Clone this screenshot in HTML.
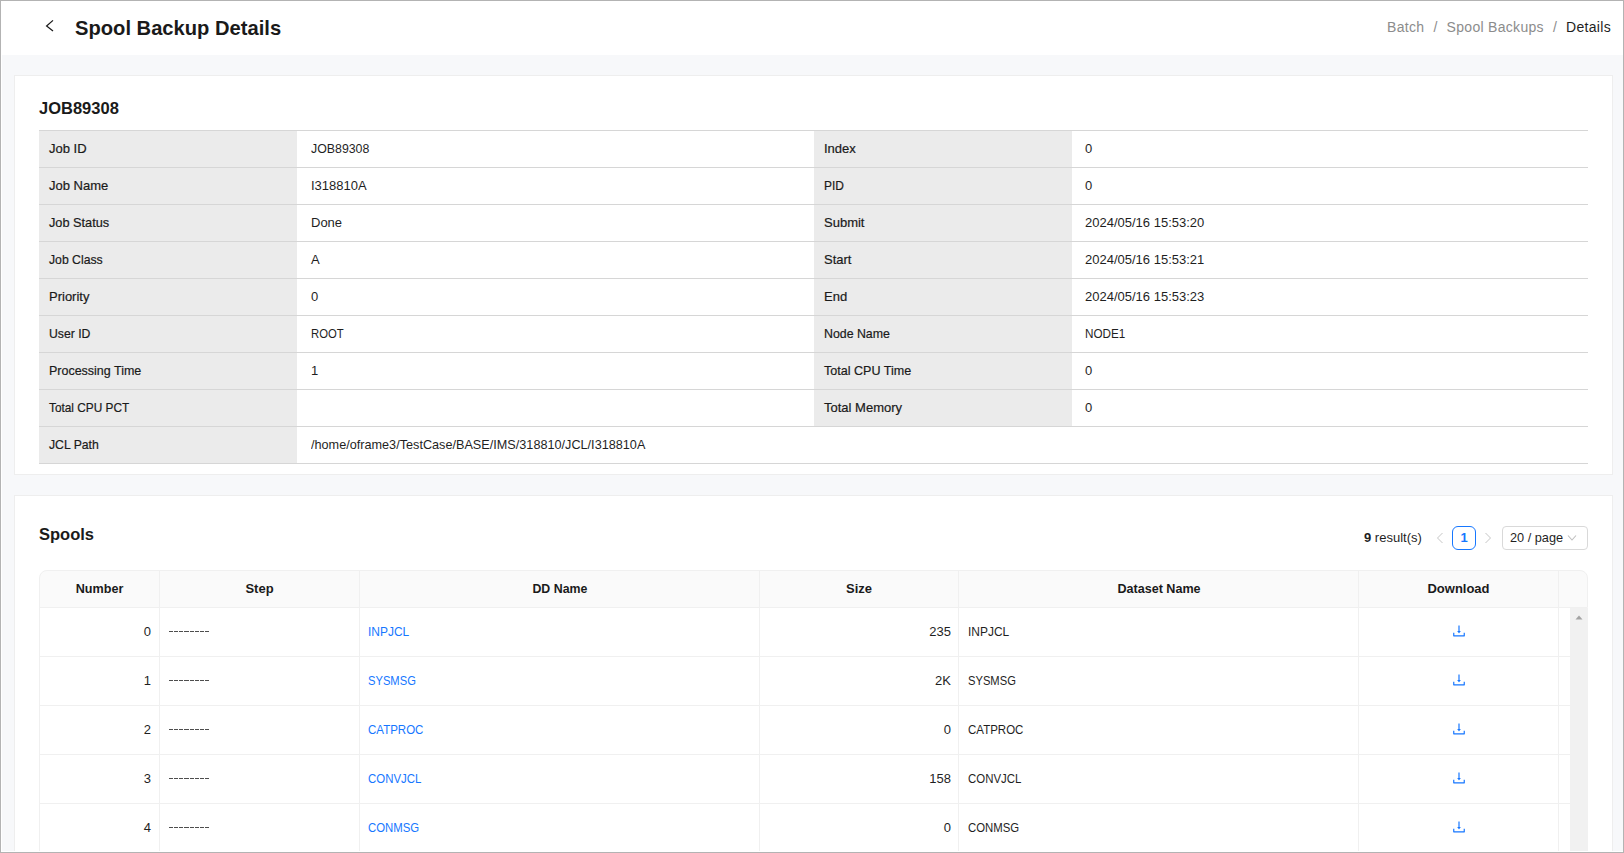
<!DOCTYPE html>
<html><head><meta charset="utf-8">
<style>
*{box-sizing:border-box;margin:0;padding:0}
html,body{width:1624px;height:853px;overflow:hidden;background:#f7f8fa;font-family:"Liberation Sans",sans-serif;color:#1f1f1f;position:relative}
.abs{position:absolute}
.sx{display:inline-block}
.frame{position:absolute;left:0;top:0;width:1624px;height:853px;border:1px solid #b3b3b3;box-shadow:inset 1px -1px 0 #fff;z-index:50;pointer-events:none}
.hdr{position:absolute;left:0;top:0;width:1624px;height:55px;background:#fff}
.back{position:absolute;left:40px;top:17px}
.title{position:absolute;left:75px;top:14.5px;font-size:21px;font-weight:bold;line-height:26px;transform:scaleX(0.96);transform-origin:0 50%;color:#1a1a1a;white-space:nowrap}
.bc{position:absolute;right:13px;top:17px;font-size:14px;letter-spacing:0.3px;line-height:20px;color:#8c8c8c;white-space:nowrap}
.bc .sep{margin:0 9px}
.bc .cur{color:#1f1f1f}
.card{position:absolute;left:14px;width:1599px;height:400px;background:#fff;border:1px solid #eeeeee}
.h{position:absolute;left:39px;font-size:16.5px;font-weight:bold;line-height:20px;color:#1a1a1a;white-space:nowrap}
table.dt{position:absolute;left:39px;top:130px;width:1549px;border-collapse:collapse;table-layout:fixed;font-size:13px}
table.dt td{height:37px;border-top:1px solid #d6d6d6;border-bottom:1px solid #d6d6d6;padding:0 0 0 11px;white-space:nowrap;color:#1f1f1f}
table.dt td.l{background:#ebebeb;color:#1a1a1a;padding-left:10px;-webkit-text-stroke:0.2px #1a1a1a}
table.dt td.v{padding-left:14px}
table.dt td.v2{padding-left:13px}
.tx{position:relative;top:-1px}
.th{position:absolute;left:39px;top:570px;width:1549px;height:38px;background:#fafafa;border:1px solid #f0f0f0;border-radius:8px 8px 0 0}
.hc{position:absolute;top:571px;height:36px;line-height:36px;font-size:13px;font-weight:bold;text-align:center;color:#1a1a1a;white-space:nowrap}
.vl{position:absolute;width:1px;background:#f0f0f0}
.r{position:absolute;left:40px;width:1530px;height:49px;border-bottom:1px solid #f0f0f0;font-size:13px}
.c{position:absolute;top:0;height:48px;line-height:48px;white-space:nowrap}
.n{left:0;width:111px;text-align:right}
.dash{position:absolute;left:128.5px;top:23px;width:41px;height:1px;background:repeating-linear-gradient(90deg,#4d4d4d 0,#4d4d4d 4.1px,transparent 4.1px,transparent 5.15px)}
.dd{left:328px;color:#1677ff}
.sz{left:720px;width:191px;text-align:right}
.ds{left:928px}
.dl{left:1411px;top:14.5px;height:16px;line-height:0}
.pg{position:absolute;top:526px;height:24px;font-size:13px;line-height:24px;white-space:nowrap}
</style></head><body>
<div class="hdr">
  <svg class="back" width="16" height="16" viewBox="0 0 16 16"><polyline points="13.0,3.4 6.6,9 13.0,14.1" fill="none" stroke="#1a1a1a" stroke-width="1.25"/></svg>
  <div class="title">Spool Backup Details</div>
  <div class="bc"><span>Batch</span><span class="sep">/</span><span>Spool Backups</span><span class="sep">/</span><span class="cur">Details</span></div>
</div>

<div class="card" style="top:75px"></div>
<div class="h" style="top:98px">JOB89308</div>
<table class="dt">
  <colgroup><col style="width:258px"><col style="width:517px"><col style="width:258px"><col style="width:516px"></colgroup>
  <tr><td class="l"><span class="tx">Job ID</span></td><td class="v"><span class="tx"><span class="sx" style="transform:scaleX(0.95);transform-origin:0 50%">JOB89308</span></span></td><td class="l"><span class="tx">Index</span></td><td class="v v2"><span class="tx">0</span></td></tr>
  <tr><td class="l"><span class="tx">Job Name</span></td><td class="v"><span class="tx">I318810A</span></td><td class="l"><span class="tx"><span class="sx" style="transform:scaleX(0.92);transform-origin:0 50%">PID</span></span></td><td class="v v2"><span class="tx">0</span></td></tr>
  <tr><td class="l"><span class="tx"><span class="sx" style="transform:scaleX(0.98);transform-origin:0 50%">Job Status</span></span></td><td class="v"><span class="tx">Done</span></td><td class="l"><span class="tx">Submit</span></td><td class="v v2"><span class="tx">2024/05/16 15:53:20</span></td></tr>
  <tr><td class="l"><span class="tx"><span class="sx" style="transform:scaleX(0.94);transform-origin:0 50%">Job Class</span></span></td><td class="v"><span class="tx">A</span></td><td class="l"><span class="tx">Start</span></td><td class="v v2"><span class="tx">2024/05/16 15:53:21</span></td></tr>
  <tr><td class="l"><span class="tx">Priority</span></td><td class="v"><span class="tx">0</span></td><td class="l"><span class="tx">End</span></td><td class="v v2"><span class="tx">2024/05/16 15:53:23</span></td></tr>
  <tr><td class="l"><span class="tx"><span class="sx" style="transform:scaleX(0.94);transform-origin:0 50%">User ID</span></span></td><td class="v"><span class="tx"><span class="sx" style="transform:scaleX(0.87);transform-origin:0 50%">ROOT</span></span></td><td class="l"><span class="tx"><span class="sx" style="transform:scaleX(0.95);transform-origin:0 50%">Node Name</span></span></td><td class="v v2"><span class="tx"><span class="sx" style="transform:scaleX(0.9);transform-origin:0 50%">NODE1</span></span></td></tr>
  <tr><td class="l"><span class="tx"><span class="sx" style="transform:scaleX(0.96);transform-origin:0 50%">Processing Time</span></span></td><td class="v"><span class="tx">1</span></td><td class="l"><span class="tx"><span class="sx" style="transform:scaleX(0.965);transform-origin:0 50%">Total CPU Time</span></span></td><td class="v v2"><span class="tx">0</span></td></tr>
  <tr><td class="l"><span class="tx"><span class="sx" style="transform:scaleX(0.91);transform-origin:0 50%">Total CPU PCT</span></span></td><td class="v"><span class="tx"></span></td><td class="l"><span class="tx">Total Memory</span></td><td class="v v2"><span class="tx">0</span></td></tr>
  <tr><td class="l"><span class="tx"><span class="sx" style="transform:scaleX(0.94);transform-origin:0 50%">JCL Path</span></span></td><td class="v" colspan="3"><span class="tx"><span class="sx" style="transform:scaleX(0.974);transform-origin:0 50%">/home/oframe3/TestCase/BASE/IMS/318810/JCL/I318810A</span></span></td></tr>
</table>

<div class="card" style="top:495px"></div>
<div class="h" style="top:524px">Spools</div>

<div class="pg" style="left:1364px"><b>9</b> result(s)</div>
<svg class="abs" style="left:1436px;top:532px" width="8" height="12" viewBox="0 0 8 12"><polyline points="6.5,1 1.5,6 6.5,11" fill="none" stroke="#c6c6c6" stroke-width="1.0"/></svg>
<div class="abs" style="left:1452px;top:526px;width:24px;height:24px;border:1px solid #1677ff;border-radius:6px;color:#1677ff;font-size:13px;font-weight:bold;line-height:22px;text-align:center">1</div>
<svg class="abs" style="left:1484px;top:532px" width="8" height="12" viewBox="0 0 8 12"><polyline points="1.5,1 6.5,6 1.5,11" fill="none" stroke="#c6c6c6" stroke-width="1.0"/></svg>
<div class="abs" style="left:1502px;top:526px;width:86px;height:24px;border:1px solid #d9d9d9;border-radius:4px"></div>
<div class="pg" style="left:1510px"><span class="sx" style="transform:scaleX(0.98);transform-origin:0 50%">20 / page</span></div>
<svg class="abs" style="left:1567px;top:534px" width="10" height="8" viewBox="0 0 10 8"><polyline points="1,1.5 5,6 9,1.5" fill="none" stroke="#bfbfbf" stroke-width="1.1"/></svg>

<div class="th"></div>
<div class="vl" style="left:39px;top:578px;height:280px"></div>
<div class="hc" style="left:40px;width:119px"><span class="sx" style="transform:scaleX(0.97);transform-origin:50% 50%">Number</span></div>
<div class="hc" style="left:160px;width:199px">Step</div>
<div class="hc" style="left:360px;width:399px"><span class="sx" style="transform:scaleX(0.95);transform-origin:50% 50%">DD Name</span></div>
<div class="hc" style="left:760px;width:198px">Size</div>
<div class="hc" style="left:959px;width:399px"><span class="sx" style="transform:scaleX(0.968);transform-origin:50% 50%">Dataset Name</span></div>
<div class="hc" style="left:1359px;width:199px">Download</div>
<div class="r" style="top:608px"><div class="c n">0</div><div class="dash"></div><div class="c dd"><span class="sx" style="transform:scaleX(0.92);transform-origin:0 50%">INPJCL</span></div><div class="c sz">235</div><div class="c ds"><span class="sx" style="transform:scaleX(0.92);transform-origin:0 50%">INPJCL</span></div><div class="c dl"><svg width="16" height="16" viewBox="0 0 1024 1024"><path fill="#1677ff" d="M505.7 661a8 8 0 0012.6 0l112-141.7c4.1-5.2.4-12.9-6.3-12.9h-74.1V168c0-4.4-3.6-8-8-8h-60c-4.4 0-8 3.6-8 8v338.3H400c-6.7 0-10.4 7.7-6.3 12.9l112 141.8zM878 626h-60c-4.4 0-8 3.6-8 8v154H214V634c0-4.4-3.6-8-8-8h-60c-4.4 0-8 3.6-8 8v198c0 17.7 14.3 32 32 32h684c17.7 0 32-14.3 32-32V634c0-4.4-3.6-8-8-8z"/></svg></div></div>
<div class="r" style="top:657px"><div class="c n">1</div><div class="dash"></div><div class="c dd"><span class="sx" style="transform:scaleX(0.86);transform-origin:0 50%">SYSMSG</span></div><div class="c sz">2K</div><div class="c ds"><span class="sx" style="transform:scaleX(0.86);transform-origin:0 50%">SYSMSG</span></div><div class="c dl"><svg width="16" height="16" viewBox="0 0 1024 1024"><path fill="#1677ff" d="M505.7 661a8 8 0 0012.6 0l112-141.7c4.1-5.2.4-12.9-6.3-12.9h-74.1V168c0-4.4-3.6-8-8-8h-60c-4.4 0-8 3.6-8 8v338.3H400c-6.7 0-10.4 7.7-6.3 12.9l112 141.8zM878 626h-60c-4.4 0-8 3.6-8 8v154H214V634c0-4.4-3.6-8-8-8h-60c-4.4 0-8 3.6-8 8v198c0 17.7 14.3 32 32 32h684c17.7 0 32-14.3 32-32V634c0-4.4-3.6-8-8-8z"/></svg></div></div>
<div class="r" style="top:706px"><div class="c n">2</div><div class="dash"></div><div class="c dd"><span class="sx" style="transform:scaleX(0.885);transform-origin:0 50%">CATPROC</span></div><div class="c sz">0</div><div class="c ds"><span class="sx" style="transform:scaleX(0.885);transform-origin:0 50%">CATPROC</span></div><div class="c dl"><svg width="16" height="16" viewBox="0 0 1024 1024"><path fill="#1677ff" d="M505.7 661a8 8 0 0012.6 0l112-141.7c4.1-5.2.4-12.9-6.3-12.9h-74.1V168c0-4.4-3.6-8-8-8h-60c-4.4 0-8 3.6-8 8v338.3H400c-6.7 0-10.4 7.7-6.3 12.9l112 141.8zM878 626h-60c-4.4 0-8 3.6-8 8v154H214V634c0-4.4-3.6-8-8-8h-60c-4.4 0-8 3.6-8 8v198c0 17.7 14.3 32 32 32h684c17.7 0 32-14.3 32-32V634c0-4.4-3.6-8-8-8z"/></svg></div></div>
<div class="r" style="top:755px"><div class="c n">3</div><div class="dash"></div><div class="c dd"><span class="sx" style="transform:scaleX(0.88);transform-origin:0 50%">CONVJCL</span></div><div class="c sz">158</div><div class="c ds"><span class="sx" style="transform:scaleX(0.88);transform-origin:0 50%">CONVJCL</span></div><div class="c dl"><svg width="16" height="16" viewBox="0 0 1024 1024"><path fill="#1677ff" d="M505.7 661a8 8 0 0012.6 0l112-141.7c4.1-5.2.4-12.9-6.3-12.9h-74.1V168c0-4.4-3.6-8-8-8h-60c-4.4 0-8 3.6-8 8v338.3H400c-6.7 0-10.4 7.7-6.3 12.9l112 141.8zM878 626h-60c-4.4 0-8 3.6-8 8v154H214V634c0-4.4-3.6-8-8-8h-60c-4.4 0-8 3.6-8 8v198c0 17.7 14.3 32 32 32h684c17.7 0 32-14.3 32-32V634c0-4.4-3.6-8-8-8z"/></svg></div></div>
<div class="r" style="top:804px"><div class="c n">4</div><div class="dash"></div><div class="c dd"><span class="sx" style="transform:scaleX(0.875);transform-origin:0 50%">CONMSG</span></div><div class="c sz">0</div><div class="c ds"><span class="sx" style="transform:scaleX(0.875);transform-origin:0 50%">CONMSG</span></div><div class="c dl"><svg width="16" height="16" viewBox="0 0 1024 1024"><path fill="#1677ff" d="M505.7 661a8 8 0 0012.6 0l112-141.7c4.1-5.2.4-12.9-6.3-12.9h-74.1V168c0-4.4-3.6-8-8-8h-60c-4.4 0-8 3.6-8 8v338.3H400c-6.7 0-10.4 7.7-6.3 12.9l112 141.8zM878 626h-60c-4.4 0-8 3.6-8 8v154H214V634c0-4.4-3.6-8-8-8h-60c-4.4 0-8 3.6-8 8v198c0 17.7 14.3 32 32 32h684c17.7 0 32-14.3 32-32V634c0-4.4-3.6-8-8-8z"/></svg></div></div>
<div class="vl" style="left:159px;top:571px;height:290px"></div>
<div class="vl" style="left:359px;top:571px;height:290px"></div>
<div class="vl" style="left:759px;top:571px;height:290px"></div>
<div class="vl" style="left:958px;top:571px;height:290px"></div>
<div class="vl" style="left:1358px;top:571px;height:290px"></div>
<div class="vl" style="left:1558px;top:571px;height:290px"></div>
<div class="abs" style="left:1570px;top:608px;width:18px;height:250px;background:#f1f1f1"></div>
<svg class="abs" style="left:1574px;top:613px" width="10" height="8" viewBox="0 0 10 8"><path d="M1.5 6.5L5 2.5L8.5 6.5Z" fill="#a3a3a3"/></svg>

<div class="frame"></div>
</body></html>
